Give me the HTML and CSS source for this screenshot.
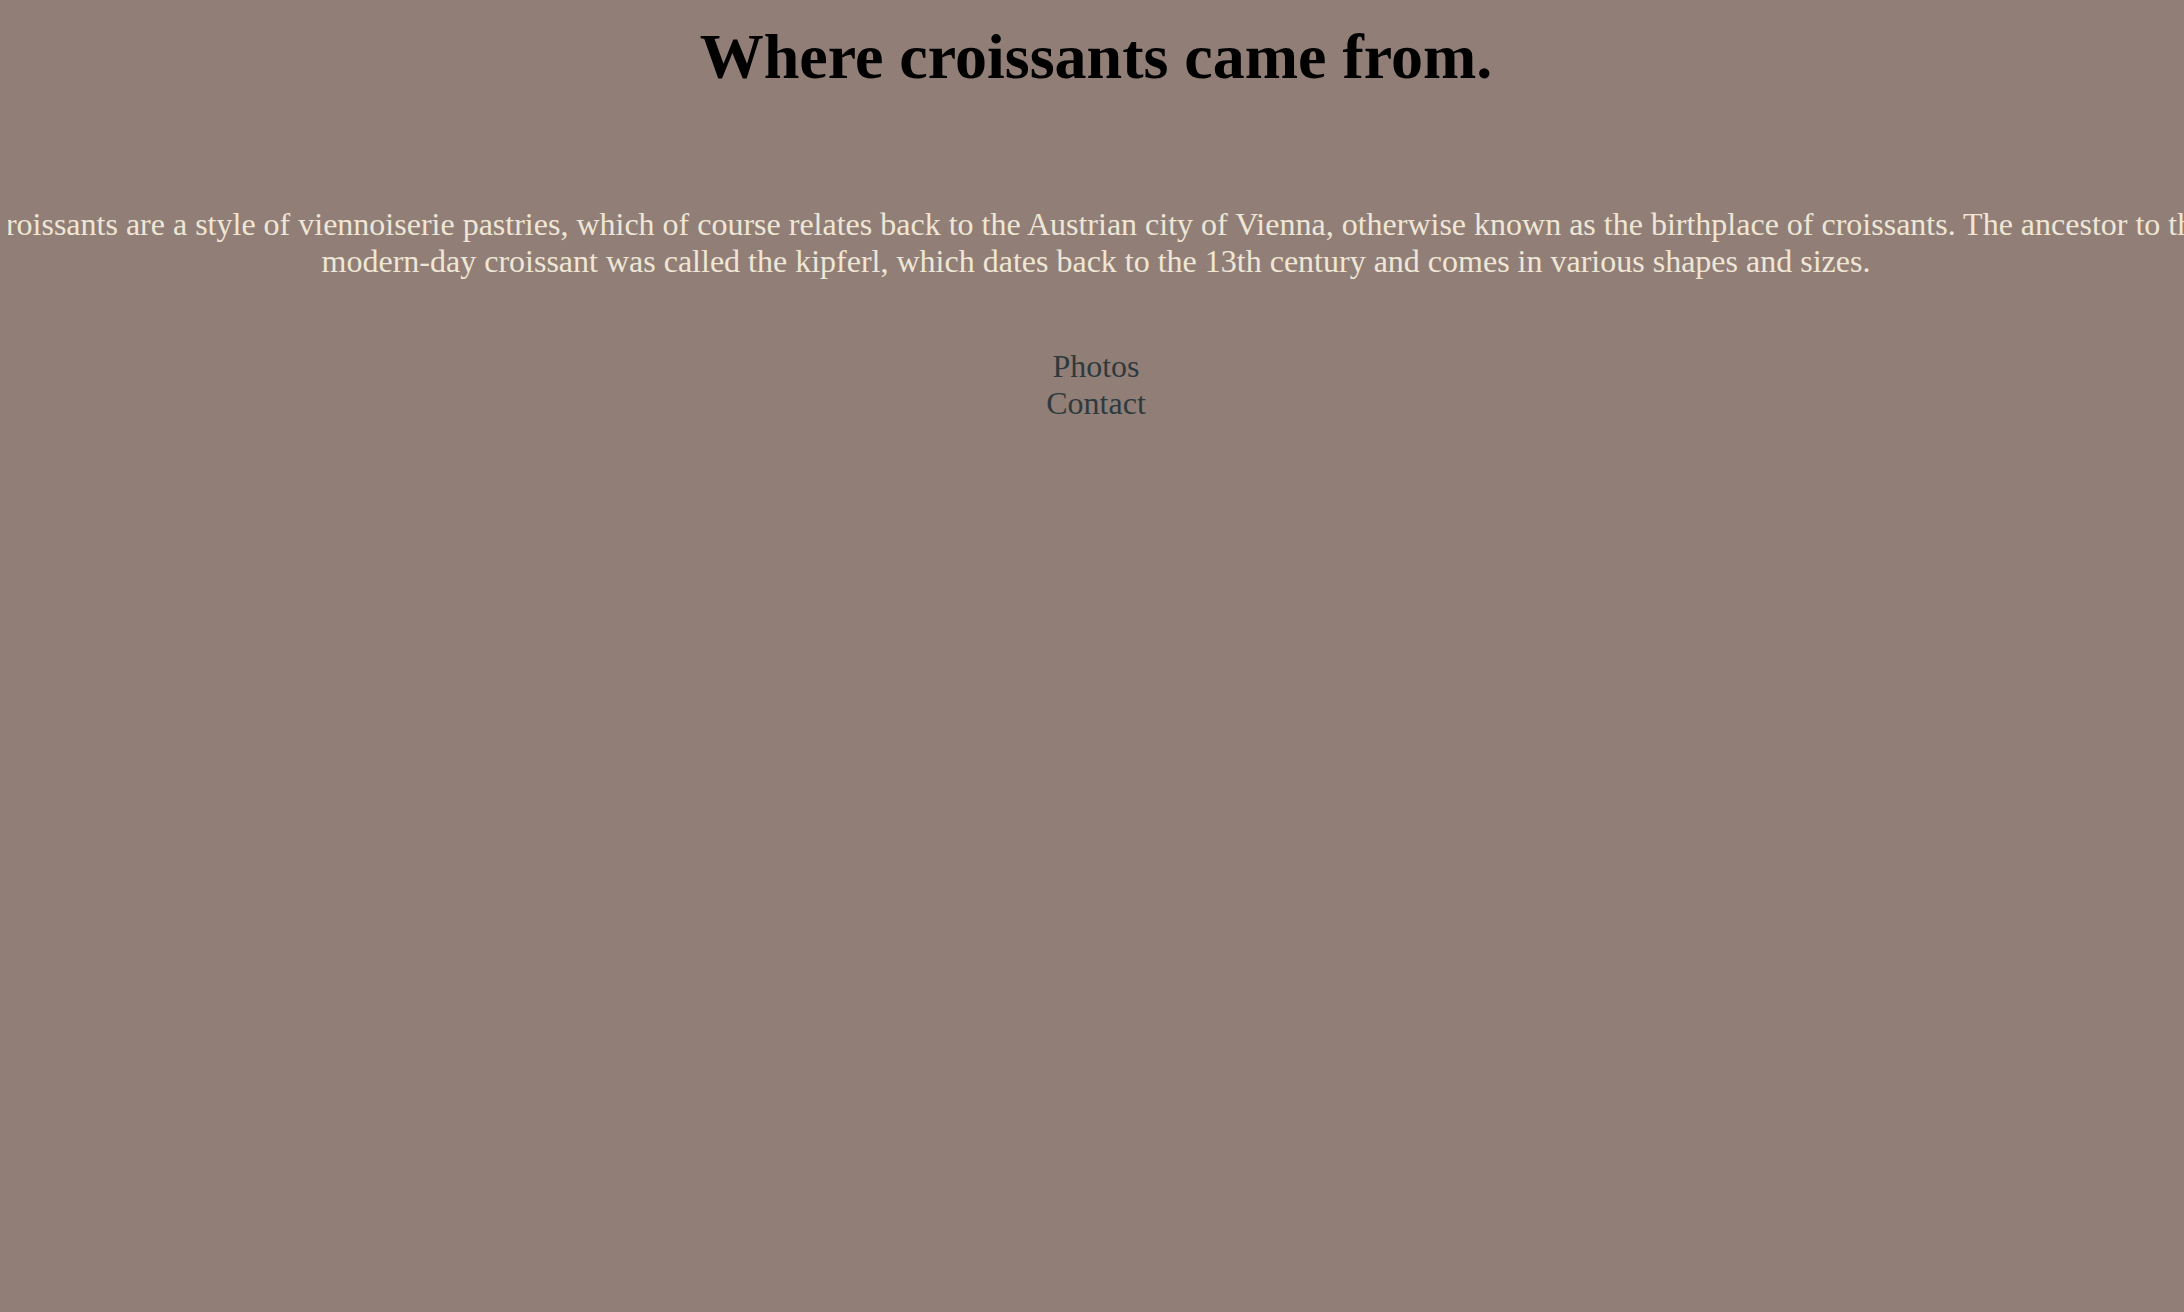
FILE: index.html
```html
<!DOCTYPE html>
<html lang="en">
<head>
<meta charset="utf-8">
<title>Where croissants came from.</title>
<link rel="stylesheet" href="styles.css">
</head>
<body>
<main class="page">
  <h1 class="title">Where croissants came from.</h1>
  <p class="intro">Croissants are a style of viennoiserie pastries, which of course relates back to the Austrian city of Vienna, otherwise known as the birthplace of croissants. The ancestor to the modern-day croissant was called the kipferl, which dates back to the 13th century and comes in various shapes and sizes.</p>
  <ul class="nav">
    <li><a href="#" class="nav-link">Photos</a></li>
    <li><a href="#" class="nav-link">Contact</a></li>
  </ul>
</main>
</body>
</html>
```

FILE: styles.css
```css
html {
  background: #917f77;
}
body {
  margin: 0 0 0 8px;
  background: #917f77;
  font-family: "Liberation Serif", "Times New Roman", serif;
  font-size: 32px;
  overflow: hidden;
}
.page {
  display: flex;
  flex-direction: column;
  align-items: center;
}
.title {
  margin: 20px 0 0;
  font-size: 64px;
  font-weight: bold;
  color: #000;
  text-align: center;
}
.intro {
  flex: none;
  width: 2300px;
  margin: 112px 0 0;
  text-align: center;
  color: #efe6d6;
}
.nav {
  list-style: none;
  margin: 68px 0 0;
  padding: 0;
  text-align: center;
}
.nav-link {
  color: #2e3a3d;
  text-decoration: none;
}
```
